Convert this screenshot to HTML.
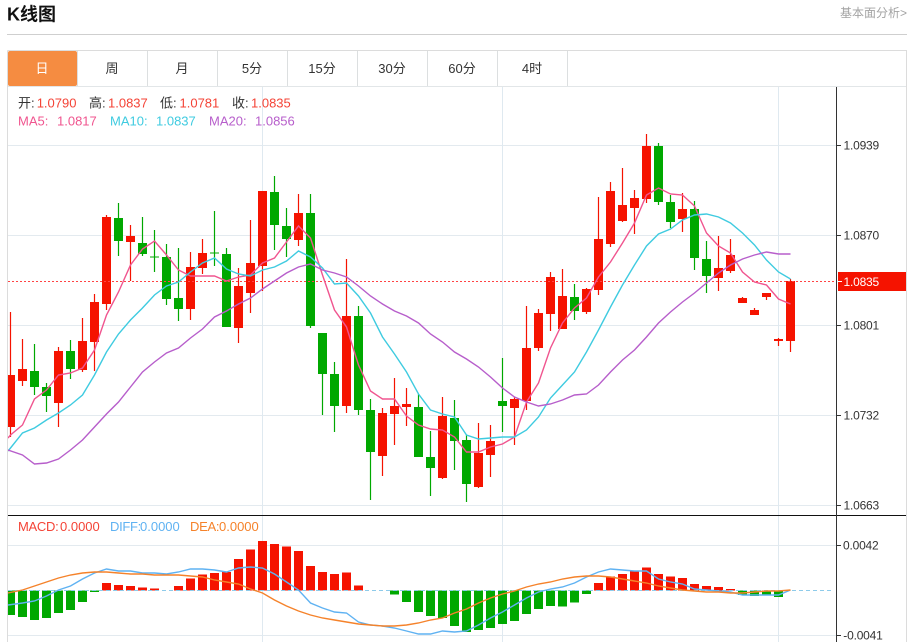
<!DOCTYPE html>
<html lang="zh">
<head>
<meta charset="utf-8">
<title>K线图</title>
<style>
html,body{margin:0;padding:0;background:#fff;width:914px;height:642px;overflow:hidden}
svg{display:block}
text{font-family:"Liberation Sans","Noto Sans CJK SC",sans-serif}
</style>
</head>
<body>
<svg width="914" height="642" viewBox="0 0 914 642" xmlns="http://www.w3.org/2000/svg">
<defs>
<clipPath id="c"><rect x="8" y="87" width="828.5" height="428"/></clipPath>
<clipPath id="d"><rect x="8" y="516" width="828.5" height="126"/></clipPath>
</defs>
<rect width="914" height="642" fill="#fff"/>
<!-- header -->
<text x="7" y="20.5" font-size="18" font-weight="bold" fill="#111">K线图</text>
<text x="907" y="17" font-size="12" fill="#a3a3a3" text-anchor="end">基本面分析&gt;</text>
<path d="M7 34.5H907" stroke="#cfcfcf" stroke-width="1"/>
<!-- frame and tabs -->
<path d="M7.5 50.5H906.5V642M7.5 50.5V642" fill="none" stroke="#dcdcdc"/>
<path d="M8 86.5H906" stroke="#e2e6e8"/>
<path d="M77.5 51V86M147.5 51V86M217.5 51V86M287.5 51V86M357.5 51V86M427.5 51V86M497.5 51V86M567.5 51V86" stroke="#dcdfe0"/>
<rect x="8" y="51" width="69" height="35" rx="2" fill="#f58c41"/>
<g font-size="13" text-anchor="middle" fill="#333">
<text x="42" y="73" fill="#fff">日</text>
<text x="112" y="73">周</text>
<text x="182" y="73">月</text>
<text x="252" y="73">5分</text>
<text x="322" y="73">15分</text>
<text x="392" y="73">30分</text>
<text x="462" y="73">60分</text>
<text x="532" y="73">4时</text>
</g>
<!-- grid -->
<path d="M8 145.5H836M8 235.5H836M8 325.5H836M8 415.5H836M8 505.5H836M8 545.5H836M8 635.5H836" stroke="#e3eaef"/>
<path d="M262.5 87V642M502.5 87V642M778.5 87V642" stroke="#dfe9f0"/>
<!-- candles -->
<g clip-path="url(#c)" fill="none">
<path stroke="#f51300" stroke-width="1.2" d="M10.5 312V437M22.5 339V386M58.5 347V427M82.5 318V372M94.5 294V371M106.5 215V310M130.5 225V281M190.5 252V320M202.5 239V274M238.5 268V343M250.5 220V313M262.5 191V291M298.5 194V246M346.5 259V413M382.5 408V476M394.5 378V445M406.5 388V426M442.5 397V479M478.5 423V488M490.5 425V477M514.5 397V445M526.5 306V410M538.5 309V351M550.5 272V331M562.5 269V329M586.5 288V314M598.5 197V295M610.5 182V247M622.5 168V222M634.5 190V234M646.5 134V203M682.5 193V232M718.5 236V291M730.5 239V273M742.5 297V303M754.5 308V315M766.5 293V300M778.5 338V346M790.5 279V352"/>
<path stroke="#f51300" stroke-width="9" d="M10.5 375V427M22.5 369V381M58.5 351V403M82.5 341V370M94.5 302V342M106.5 217V304M130.5 236V242M190.5 267V309M202.5 253V268M238.5 286V328M250.5 263V293M262.5 191V266M298.5 213V240M346.5 316V406M382.5 413V456M394.5 406V414M406.5 404V407M442.5 416V478M478.5 453V487M490.5 441V455M514.5 399V408M526.5 348V401M538.5 313V348M550.5 277V314M562.5 296V329M586.5 289V312M598.5 239V290M610.5 191V244M622.5 205V221M634.5 198V208M646.5 146V199M682.5 209V219M718.5 268V278M730.5 255V271M742.5 298V303M754.5 310V315M766.5 293V297M778.5 339V341M790.5 281V341"/>
<path stroke="#00a800" stroke-width="1.2" d="M34.5 344V395M46.5 383V412M70.5 340V379M118.5 203V256M142.5 217V256M154.5 230V272M166.5 244V305M178.5 248V321M214.5 211V266M226.5 248V327M274.5 176V250M286.5 208V257M310.5 194V328M322.5 333V415M334.5 362V432M358.5 306V415M370.5 399V500M418.5 394V457M430.5 431V496M454.5 400V470M466.5 435V502M502.5 358V432M574.5 284V320M658.5 143V205M670.5 195V228M694.5 201V270M706.5 241V293"/>
<path stroke="#00a800" stroke-width="9" d="M34.5 371V387M46.5 387V396M70.5 351V369M118.5 218V241M142.5 243V254M154.5 256.5V257.5M166.5 257V299M178.5 298V309M214.5 252.5V253.5M226.5 254V327M274.5 192V225M286.5 226V239M310.5 213V326M322.5 333V374M334.5 374V406M358.5 316V410M370.5 410V452M418.5 407V457M430.5 457V468M454.5 418V441M466.5 440V484M502.5 401V406M574.5 297V311M658.5 146V202M670.5 202V222M694.5 209V258M706.5 259V276"/>
<!-- price line -->
<path d="M8 281.5H836" stroke="#f44" stroke-dasharray="2 2"/>
<!-- MA lines -->
<path stroke="#f0558f" stroke-width="1.4" d="M8 438L10.5 435L22.5 425L34.5 399L46.5 390L58.5 375L70.5 373L82.5 368L94.5 350L106.5 315L118.5 292L130.5 265L142.5 249L154.5 241L166.5 255L178.5 270L190.5 276L202.5 276L214.5 276L226.5 281L238.5 277L250.5 275L262.5 263L274.5 258L286.5 242L298.5 226L310.5 238L322.5 275L334.5 310L346.5 327L358.5 365L370.5 391L382.5 399L394.5 399L406.5 416L418.5 425L430.5 429L442.5 430L454.5 437L466.5 452L478.5 452L490.5 447L502.5 444L514.5 437L526.5 402L538.5 383L550.5 348L562.5 323L574.5 308L586.5 298L598.5 277L610.5 262L622.5 243L634.5 223L646.5 195L658.5 188L670.5 194L682.5 195L694.5 206L706.5 233L718.5 246L730.5 253L742.5 272L754.5 282L766.5 285L778.5 299L790.5 304"/>
<path stroke="#3fcbe0" stroke-width="1.4" d="M8 451L10.5 448L22.5 433L34.5 428L46.5 420L58.5 413L70.5 405L82.5 395L94.5 375L106.5 352L118.5 334L130.5 320L142.5 308L154.5 295L166.5 286L178.5 282L190.5 272L202.5 263L214.5 258L226.5 269L238.5 274L250.5 276L262.5 270L274.5 267L286.5 261L298.5 251L310.5 257L322.5 268L334.5 284L346.5 283L358.5 296L370.5 313L382.5 337L394.5 354L406.5 372L418.5 394L430.5 410L442.5 414L454.5 417L466.5 435L478.5 439L490.5 438L502.5 437L514.5 437L526.5 430L538.5 417L550.5 398L562.5 385L574.5 372L586.5 352L598.5 330L610.5 307L622.5 285L634.5 265L646.5 246L658.5 234L670.5 229L682.5 220L694.5 215L706.5 214L718.5 217L730.5 223L742.5 233L754.5 245L766.5 260L778.5 272L790.5 279"/>
<path stroke="#b75ecb" stroke-width="1.4" d="M8 450L22.5 455L34.5 464L46.5 463L58.5 459L70.5 450L82.5 440L94.5 427L106.5 414L118.5 402L130.5 387L142.5 372L154.5 362L166.5 353L178.5 348L190.5 338L202.5 329L214.5 317L226.5 311L238.5 304L250.5 298L262.5 289L274.5 281L286.5 273L298.5 267L310.5 264L322.5 270L334.5 273L346.5 277L358.5 286L370.5 296L382.5 304L394.5 311L406.5 316L418.5 323L430.5 334L442.5 342L454.5 352L466.5 359L478.5 367L490.5 377L502.5 388L514.5 397L526.5 402L538.5 406L550.5 404L562.5 400L574.5 395L586.5 394L598.5 385L610.5 372L622.5 360L634.5 350L646.5 337L658.5 323L670.5 312L682.5 302L694.5 293L706.5 283L718.5 273L730.5 265L742.5 259L754.5 255L766.5 252L778.5 254L790.5 254"/>
</g>
<!-- MACD -->
<g clip-path="url(#d)" fill="none">
<path stroke="#f51300" stroke-width="9" d="M106.5 583V590.5M118.5 585V590.5M130.5 586V590.5M142.5 587.5V590.5M154.5 588.5V590.5M178.5 586V590.5M190.5 578.5V590.5M202.5 574.5V590.5M214.5 573V590.5M226.5 572V590.5M238.5 559V590.5M250.5 549.5V590.5M262.5 541V590.5M274.5 544V590.5M286.5 546.5V590.5M298.5 551V590.5M310.5 566V590.5M322.5 572V590.5M334.5 574V590.5M346.5 572.5V590.5M358.5 585.5V590.5M598.5 583V590.5M610.5 576.5V590.5M622.5 574V590.5M634.5 570.5V590.5M646.5 567.5V590.5M658.5 574V590.5M670.5 576.5V590.5M682.5 578V590.5M694.5 584V590.5M706.5 586V590.5M718.5 587V590.5M730.5 589V590.5"/>
<path stroke="#00a800" stroke-width="9" d="M10.5 590.5V615M22.5 590.5V617M34.5 590.5V620M46.5 590.5V618M58.5 590.5V613M70.5 590.5V610M82.5 590.5V602M94.5 590.5V592M394.5 590.5V594.5M406.5 590.5V602M418.5 590.5V612M430.5 590.5V616M442.5 590.5V618M454.5 590.5V626M466.5 590.5V632M478.5 590.5V630M490.5 590.5V628M502.5 590.5V624M514.5 590.5V621M526.5 590.5V614M538.5 590.5V609M550.5 590.5V606M562.5 590.5V606.5M574.5 590.5V602.5M586.5 590.5V594M742.5 590.5V595M754.5 590.5V596M766.5 590.5V595M778.5 590.5V597"/>
<path stroke="#8ecbea" d="M8 590.5H834" stroke-dasharray="4 3"/>
<path stroke="#5fb2f2" stroke-width="1.4" d="M8 605L22.5 603L34.5 601L46.5 596L58.5 590L70.5 586L82.5 579L94.5 573L106.5 569L118.5 571L130.5 571L142.5 573L154.5 573L166.5 574L178.5 572L190.5 569L202.5 569L214.5 570L226.5 572L238.5 568L250.5 567L262.5 568L274.5 574L286.5 582L298.5 590L310.5 603L322.5 608L334.5 612L346.5 613L358.5 622L370.5 625L382.5 626L394.5 628L406.5 631L418.5 634L430.5 634L442.5 631L454.5 632L466.5 631L478.5 625L490.5 618L502.5 612L514.5 605L526.5 598L538.5 592L550.5 589L562.5 587L574.5 583L586.5 577L598.5 572L610.5 569L622.5 570L634.5 571L646.5 571L658.5 579L670.5 582L682.5 584L694.5 589L706.5 590L718.5 591L730.5 592L742.5 595L754.5 595L766.5 595L778.5 595L790.5 590"/>
<path stroke="#f5822a" stroke-width="1.4" d="M8 593L22.5 590L34.5 586L46.5 582L58.5 578L70.5 575L82.5 573L94.5 572L106.5 572L118.5 573L130.5 574L142.5 574L154.5 575L166.5 575L178.5 575L190.5 576L202.5 577L214.5 580L226.5 582L238.5 584L250.5 589L262.5 593L274.5 600L286.5 606L298.5 611L310.5 615L322.5 618L334.5 620L346.5 622L358.5 624L370.5 625L382.5 626L394.5 626L406.5 625L418.5 623L430.5 620L442.5 618L454.5 613L466.5 609L478.5 603L490.5 598L502.5 594L514.5 591L526.5 587L538.5 584L550.5 582L562.5 579L574.5 577L586.5 576L598.5 576L610.5 577L622.5 579L634.5 581L646.5 583L658.5 586L670.5 588L682.5 590L694.5 591L706.5 592L718.5 592L730.5 593L742.5 593L754.5 592L766.5 591L778.5 591L790.5 590"/>
</g>
<!-- axes -->
<path d="M8 515.5H906" stroke="#111"/>
<path d="M836.5 87V642" stroke="#333"/>
<path d="M837 145.5H841M837 235.5H841M837 325.5H841M837 415.5H841M837 505.5H841M837 545.5H841M837 635.5H841" stroke="#333"/>
<rect x="838" y="272" width="68" height="19" fill="#f51300"/>
<path d="M838 281.5H842" stroke="#fff"/>
<g font-size="12" fill="#333" letter-spacing="-.2">
<text x="843.5" y="149.5">1.0939</text>
<text x="843.5" y="239.5">1.0870</text>
<text x="843.5" y="286" fill="#fff">1.0835</text>
<text x="843.5" y="329.5">1.0801</text>
<text x="843.5" y="419.5">1.0732</text>
<text x="843.5" y="509.5">1.0663</text>
<text x="843" y="549.5">0.0042</text>
<text x="843.3" y="639.5">-0.0041</text>
</g>
<!-- legends -->
<g font-size="13">
<text x="18" y="107.5" fill="#333">开:</text><text x="36.7" y="107.5" fill="#f44336">1.0790</text>
<text x="89" y="107.5" fill="#333">高:</text><text x="108" y="107.5" fill="#f44336">1.0837</text>
<text x="160" y="107.5" fill="#333">低:</text><text x="179.5" y="107.5" fill="#f44336">1.0781</text>
<text x="232" y="107.5" fill="#333">收:</text><text x="251" y="107.5" fill="#f44336">1.0835</text>
<text x="18" y="125.5" fill="#f0558f">MA5:</text><text x="57" y="125.5" fill="#f0558f">1.0817</text>
<text x="110" y="125.5" fill="#3fcbe0">MA10:</text><text x="156" y="125.5" fill="#3fcbe0">1.0837</text>
<text x="209" y="125.5" fill="#b75ecb">MA20:</text><text x="255" y="125.5" fill="#b75ecb">1.0856</text>
<text x="18" y="531" fill="#f44336" letter-spacing="-.3">MACD:</text><text x="60" y="531" fill="#f44336">0.0000</text>
<text x="110" y="531" fill="#5fb2f2" letter-spacing="-.3">DIFF:</text><text x="140" y="531" fill="#5fb2f2">0.0000</text>
<text x="190" y="531" fill="#f5822a" letter-spacing="-.3">DEA:</text><text x="219" y="531" fill="#f5822a">0.0000</text>
</g>
</svg>
</body>
</html>
